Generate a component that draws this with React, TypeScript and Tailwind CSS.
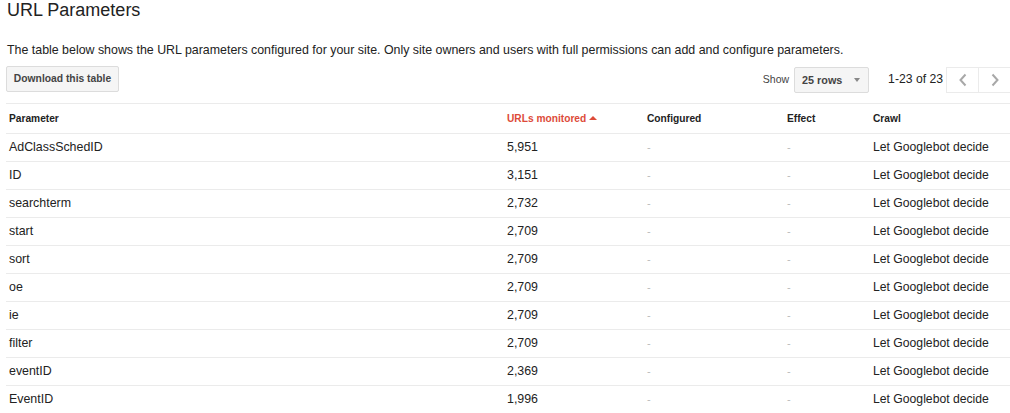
const ROWS: [string, string][] = [
  ["AdClassSchedID", "5,951"],
  ["ID", "3,151"],
  ["searchterm", "2,732"],
  ["start", "2,709"],
  ["sort", "2,709"],
  ["oe", "2,709"],
  ["ie", "2,709"],
  ["filter", "2,709"],
  ["eventID", "2,369"],
  ["EventID", "1,996"],
];

const COLS = "grid grid-cols-[498px_140px_140px_86px_1fr]";

function Chevron({ dir }: { dir: "left" | "right" }) {
  return (
    <svg width="10" height="14" viewBox="0 0 10 14" fill="none">
      <polyline
        points={dir === "left" ? "7.5,1.5 2.5,7 7.5,12.5" : "2.5,1.5 7.5,7 2.5,12.5"}
        stroke="#a8a8a8"
        strokeWidth="2"
      />
    </svg>
  );
}

export default function App() {
  return (
    <div className="h-[413px] w-[1010px] overflow-hidden bg-white pl-[6px] font-['Liberation_Sans',Arial,sans-serif] text-[#222]">
      <h1 className="pl-px text-[18px] leading-[20px] font-normal">URL Parameters</h1>
      <p className="mt-[22px] pl-px text-[12.4px] leading-[16px]">
        The table below shows the URL parameters configured for your site. Only site owners and users with full
        permissions can add and configure parameters.
      </p>

      <div className="mt-[8px] flex items-start justify-between">
        <button className="h-[26px] w-[113px] rounded-[2px] border border-[#dcdcdc] bg-[#f5f5f5] text-[10.3px] font-bold text-[#444]">
          Download this table
        </button>
        <div className="mr-[-1px] flex items-center">
          <span className="mr-[5px] text-[10.5px] text-[#444]">Show</span>
          <div className="mt-px flex h-[26px] w-[75px] items-center justify-between rounded-[2px] border border-[#dcdcdc] bg-[#f5f5f5] pr-[8px] pl-[7px]">
            <span className="text-[10.8px] font-bold text-[#444]">25 rows</span>
            <span className="h-0 w-0 border-x-[3.5px] border-t-[4px] border-x-transparent border-t-[#888]" />
          </div>
          <span className="ml-[19px] text-[12.2px]">1-23 of 23</span>
          <div className="ml-[3px] flex h-[26px] border border-[#ebebeb]">
            <div className="flex w-[32px] items-center justify-center border-r border-[#ebebeb]">
              <Chevron dir="left" />
            </div>
            <div className="flex w-[31px] items-center justify-center">
              <Chevron dir="right" />
            </div>
          </div>
        </div>
      </div>

      <div className="mt-[10px] border-t border-[#ebebeb]">
        <div className={`${COLS} h-[30px] items-center border-b border-[#ebebeb] text-[10.2px] font-bold`}>
          <div className="pl-[3px]">Parameter</div>
          <div className="flex items-center gap-[3px] pl-[3px] text-[#dd4b39]">
            URLs monitored
            <span className="h-0 w-0 border-x-[4px] border-b-[4px] border-x-transparent border-b-[#dd4b39]" />
          </div>
          <div className="pl-[3px]">Configured</div>
          <div className="pl-[3px]">Effect</div>
          <div className="pl-[3px]">Crawl</div>
        </div>
        {ROWS.map(([name, count]) => (
          <div key={name} className={`${COLS} h-[28px] items-center border-b border-[#ebebeb] text-[12.4px]`}>
            <div className="pl-[3px]">{name}</div>
            <div className="pl-[3px]">{count}</div>
            <div className="pl-[3px] text-[11px] text-[#bbb]">-</div>
            <div className="pl-[3px] text-[11px] text-[#bbb]">-</div>
            <div className="pl-[3px] text-[12.2px]">Let Googlebot decide</div>
          </div>
        ))}
      </div>
    </div>
  );
}
